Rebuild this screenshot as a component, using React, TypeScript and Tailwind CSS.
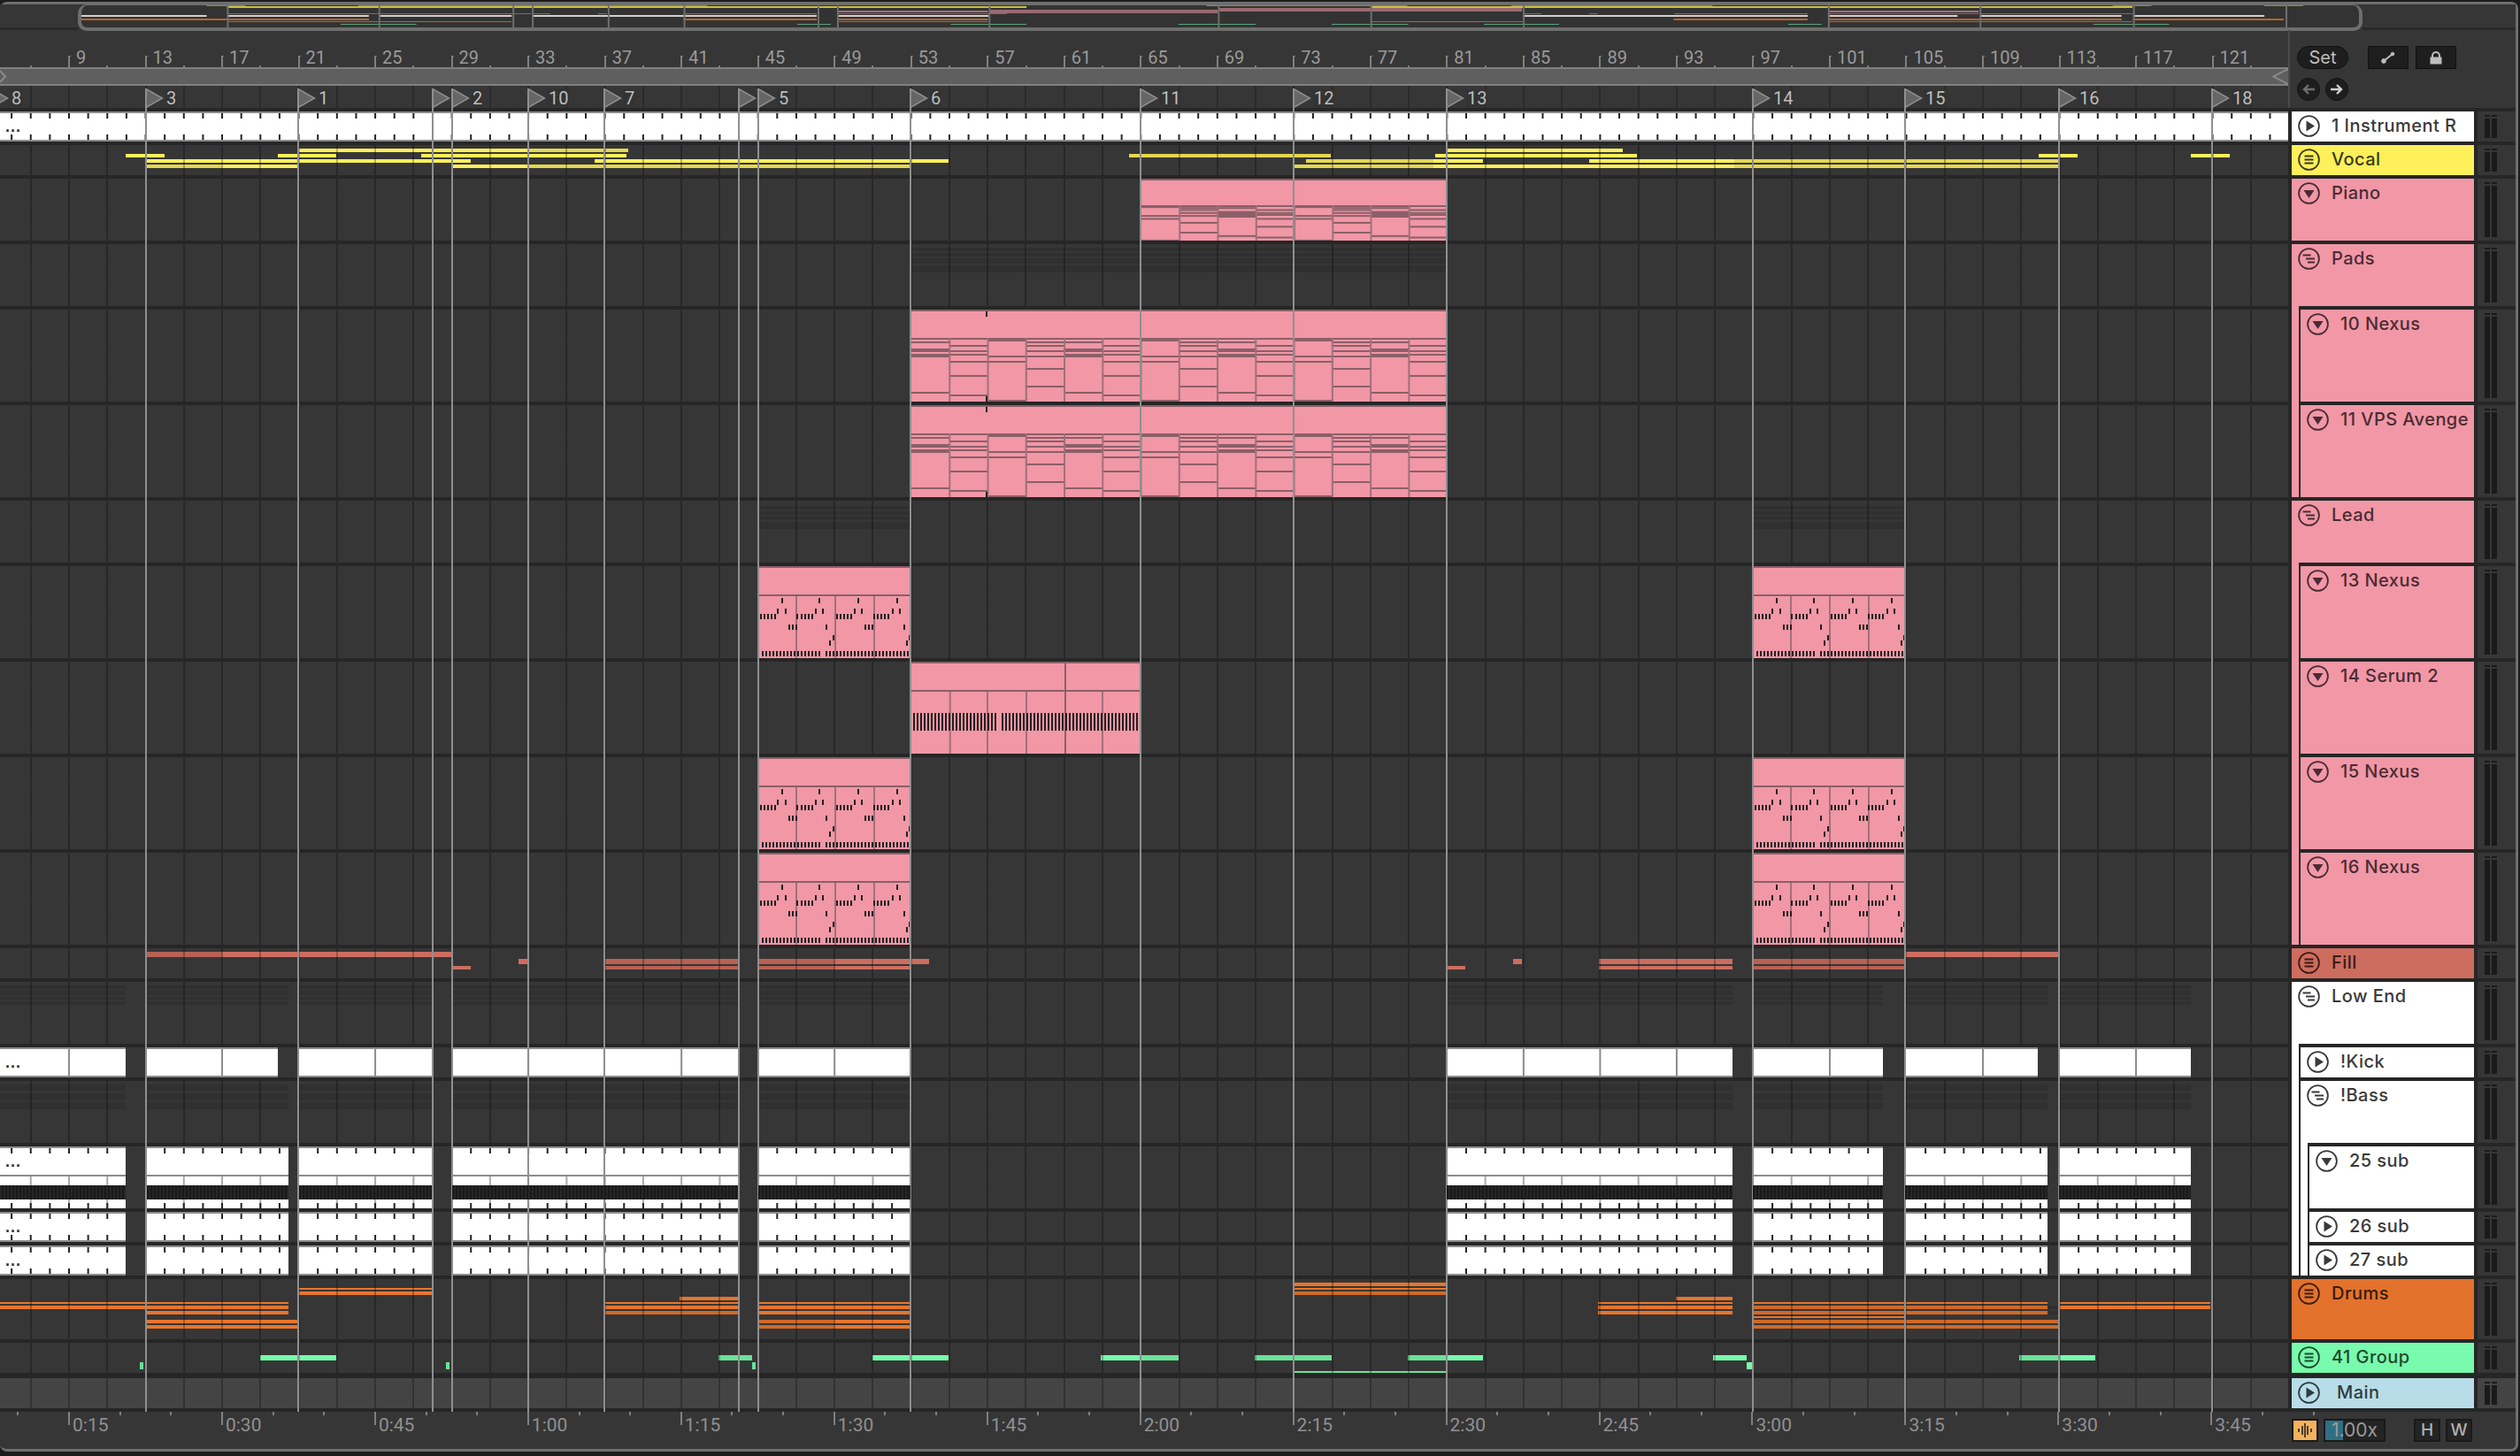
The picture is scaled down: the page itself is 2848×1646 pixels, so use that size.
import type { ReactNode } from 'react';

// bar number -> x in the arrangement
const bx = (bar: number) => 78 + (bar - 9) * 21.63;

const LOCATORS: [number, string][] = [
  [-10, '8'], [165, '3'], [337, '1'], [489, ''], [511, '2'], [597, '10'], [683, '7'], [835, ''],
  [857, '5'], [1029, '6'], [1289, '11'], [1462, '12'], [1635, '13'], [1981, '14'], [2153, '15'],
  [2327, '16'], [2500, '18'],
];

const KICK: [number, number][] = [[-10, 142], [166, 314], [338, 488], [511, 834], [857, 1029], [1635, 1958], [1981, 2128], [2153, 2303], [2327, 2476]];
const SUB: [number, number][] = [[-10, 142], [166, 326], [338, 488], [511, 834], [857, 1029], [1635, 1958], [1981, 2128], [2153, 2314], [2327, 2476]];

// x1, x2, top, height (relative to the lane)
type Note = [number, number, number, number];

const VOCAL: Note[] = [
  [338, 710, 4, 4], [1635, 1834, 4, 4],
  [142, 186, 10, 4], [314, 380, 10, 4], [476, 708, 10, 4], [1276, 1504, 10, 4], [1622, 1850, 10, 4], [2304, 2348, 10, 4], [2476, 2520, 10, 4],
  [165, 532, 16, 4], [672, 1072, 16, 4], [1476, 1676, 16, 4], [1796, 2326, 16, 4],
  [166, 336, 22, 4], [510, 1029, 22, 4], [1462, 2326, 22, 4],
];
const VOCAL_DIM: Note[] = [[1276, 1504, 10, 4], [1476, 1620, 16, 4], [1960, 2326, 16, 4], [1462, 1620, 22, 4], [1960, 2326, 22, 4], [597, 710, 4, 4], [166, 250, 22, 4], [597, 1029, 22, 4]];

const FILL: Note[] = [
  [166, 510, 4, 6], [2153, 2327, 4, 6],
  [586, 596, 12, 6], [683, 834, 12, 6], [857, 1050, 12, 6], [1710, 1720, 12, 6], [1807, 1958, 12, 6], [1981, 2152, 12, 6],
  [512, 532, 20, 4], [683, 834, 20, 4], [857, 1029, 20, 4], [1635, 1656, 20, 4], [1807, 1958, 20, 4], [1981, 2152, 20, 4],
];
const FILL_DIM: Note[] = [[166, 251, 4, 6], [683, 834, 12, 6], [683, 834, 20, 4], [857, 943, 12, 6], [857, 943, 20, 4], [1981, 2152, 12, 6], [1981, 2152, 20, 4]];

const DRUMS: Note[] = [
  [1462, 1635, 4, 4], [1462, 1635, 10, 2], [1462, 1635, 14, 4],
  [338, 488, 10, 2], [338, 488, 14, 4],
  [768, 834, 20, 4], [1894, 1958, 20, 4],
  [0, 326, 26, 2], [0, 326, 30, 4], [166, 326, 36, 4], [166, 337, 46, 4], [166, 337, 52, 4],
  [683, 834, 26, 2], [683, 834, 30, 4], [683, 834, 36, 4],
  [858, 1028, 26, 2], [858, 1028, 30, 4], [858, 1028, 36, 4], [858, 1028, 46, 4], [858, 1028, 52, 4],
  [1806, 1958, 26, 2], [1806, 1958, 30, 4], [1806, 1958, 36, 4],
  [1982, 2314, 26, 2], [1982, 2314, 30, 4], [1982, 2314, 36, 4], [1982, 2153, 42, 2], [1982, 2326, 46, 4], [1982, 2326, 52, 4],
  [2327, 2498, 26, 2], [2327, 2498, 30, 4],
];
const DRUMS_DIM: Note[] = [[1982, 2326, 30, 4], [1982, 2326, 36, 4], [1982, 2326, 46, 4], [1982, 2326, 52, 4], [1462, 1635, 14, 4], [683, 834, 36, 4], [858, 943, 46, 4], [858, 943, 52, 4]];

const GROUP: Note[] = [
  [294, 380, 14, 6], [812, 850, 14, 6], [986, 1072, 14, 6], [1244, 1332, 14, 6], [1418, 1505, 14, 6], [1591, 1676, 14, 6], [1936, 1974, 14, 6], [2282, 2368, 14, 6],
  [158, 162, 22, 8], [504, 508, 22, 8], [850, 854, 22, 8], [1974, 1980, 22, 8],
  [1462, 1635, 32, 2],
];
const GROUP_DIM: Note[] = [[812, 850, 14, 6], [1290, 1332, 14, 6], [1418, 1505, 14, 6], [1591, 1635, 14, 6], [2282, 2327, 14, 6], [1462, 1635, 32, 2], [850, 854, 22, 8], [158, 162, 22, 8], [504, 508, 22, 8]];

const ROLL: [number, number][][] = [
  [[36, 2], [44, 4], [50, 4], [93, 2]],
  [[40, 2], [46, 2], [50, 2], [58, 2], [74, 2], [96, 2]],
  [[34, 2], [52, 2], [58, 2], [102, 2]],
  [[36, 2], [40, 2], [46, 2], [52, 2], [66, 2], [86, 2]],
];

function Notes({ notes, color, dim = [] }: { notes: Note[]; color: string; dim?: Note[] }) {
  return (
    <>
      {notes.map(([a, b, top, h], i) => (
        <div key={i} className={`absolute ${color}`} style={{ left: a, width: b - a, top, height: h }} />
      ))}
      {dim.map(([a, b, top, h], i) => (
        <div key={`d${i}`} className="absolute bg-black/10" style={{ left: a, width: b - a, top, height: h }} />
      ))}
    </>
  );
}

function Faint({ segs, strips }: { segs: [number, number][]; strips: [number, number][] }) {
  return (
    <>
      {segs.map(([a, b]) =>
        strips.map(([top, h]) => (
          <div key={`${a}-${top}`} className="absolute bg-black/10" style={{ left: a, width: b - a, top, height: h }} />
        )),
      )}
    </>
  );
}

// white audio style clip with its little ticks
function WhiteClip({ a, b, h, ticks = true, bottomTicks = false, dots, dividers = false, band = false }: {
  a: number; b: number; h: number; ticks?: boolean; bottomTicks?: boolean; dots?: boolean; dividers?: boolean; band?: boolean;
}) {
  const bars: number[] = [];
  for (let i = 3; i < 125; i++) if (bx(i) > a + 2 && bx(i) < b - 1) bars.push(i);
  return (
    <div className="absolute top-0 bg-white" style={{ left: a, width: b - a, height: h }}>
      <div className="absolute inset-x-0 top-0 h-[2px] bg-[#8c8c8c]" />
      {!band && <div className="absolute inset-x-0 bottom-0 h-[2px] bg-[#8c8c8c]" />}
      {band && (
        <>
          <div className="absolute inset-x-0 top-[32px] h-[2px] bg-[#8c8c8c]" />
          <div className="absolute inset-x-0 top-[44px] h-[16px] bg-[repeating-linear-gradient(90deg,#191919_0,#191919_2px,#262626_2px,#262626_4px)] z-10" />
        </>
      )}
      <svg className="absolute inset-0" width={Math.max(b - a, 1)} height={h}>
        {bars.map((i) => {
          const x = bx(i) - a - 1;
          const step = i >= 81 ? 4 : 8;
          return (
            <g key={i}>
              {dividers && (i - 9) % step === 0 && <rect x={x} y={0} width={2} height={h} fill="#8c8c8c" />}
              {band && i % 2 === 1 && <rect x={x} y={34} width={2} height={36} fill="#aaaaaa" />}
              {ticks && <rect x={x} y={2} width={2} height={6} fill="#222222" />}
              {bottomTicks && <rect x={x} y={band ? 64 : h - 8} width={2} height={6} fill="#222222" />}
            </g>
          );
        })}
      </svg>
      {dots && (
        <span className="absolute left-[16px] top-[10px] text-[18px] leading-[14px] font-bold tracking-[1px] text-[#333] [font-family:'Liberation_Sans',sans-serif]">
          ...
        </span>
      )}
    </div>
  );
}

function PinkBox({ a, b, children }: { a: number; b: number; children: ReactNode }) {
  return (
    <div className="absolute inset-y-0 bg-[#f197a6]" style={{ left: a, width: b - a }}>
      <svg className="absolute inset-0 h-full w-full">
        <rect x={0} y={0} width={b - a} height={2} fill="#8b5f68" />
        {children}
      </svg>
    </div>
  );
}

function RollClip({ a, b, h, phase = 0 }: { a: number; b: number; h: number; phase?: number }) {
  const head = h === 104 ? 32 : 30;
  const cells = Math.ceil((b - a) / 43.26);
  const y = (v: number) => (h === 104 ? v : 30 + ((v - 32) * 40) / 72);
  return (
    <PinkBox a={a} b={b}>
      <rect x={0} y={head} width={b - a} height={2} fill="#8b5f68" />
      {Array.from({ length: cells }).map((_, i) => (
        <g key={i}>
          {ROLL[(i + phase) % 4].map(([top, t]) => (
            <rect key={top} x={i * 43.26} y={y(top)} width={43.26} height={t} fill="#8b5f68" />
          ))}
          {i > 0 && <rect x={i * 43.26 - 1} y={head} width={2} height={h - head} fill="#a0707a" />}
        </g>
      ))}
      {h === 104 && phase === 0 && (
        <>
          <rect x={84} y={2} width={2} height={6} fill="#231f20" />
          <rect x={84} y={98} width={2} height={6} fill="#231f20" />
        </>
      )}
    </PinkBox>
  );
}

const NEXUS: [number, number[]][] = [
  [36, [25, 67, 111, 155]],
  [48, [20, 29, 63, 71, 107, 115, 150, 158]],
  [54, [1, 5, 9, 13, 17, 42, 47, 51, 55, 59, 87, 91, 95, 99, 103, 129, 133, 137, 141, 145]],
  [66, [33, 37, 41, 75, 119, 123, 127, 163]],
  [78, [83, 169]],
  [84, [79, 166]],
];

function NexusClip({ a }: { a: number }) {
  const comb = Array.from({ length: 42 }, (_, i) => 3 + i * 4).filter((v) => v !== 71);
  return (
    <PinkBox a={a} b={a + 170}>
      <rect x={0} y={32} width={170} height={2} fill="#8b5f68" />
      {[41, 85, 129].map((x) => (
        <rect key={x} x={x} y={34} width={2} height={70} fill="#a0707a" />
      ))}
      {NEXUS.map(([y, xs]) => xs.map((x) => <rect key={`${y}-${x}`} x={x} y={y} width={2} height={6} fill="#231f20" />))}
      {comb.map((x) => (
        <rect key={x} x={x} y={96} width={2} height={6} fill="#231f20" />
      ))}
    </PinkBox>
  );
}

function SerumClip() {
  const comb = Array.from({ length: 64 }, (_, i) => 2 + i * 4).filter((v) => v !== 98);
  return (
    <PinkBox a={1030} b={1288}>
      <rect x={0} y={32} width={258} height={2} fill="#8b5f68" />
      {[42.7, 85, 129, 215].map((x) => (
        <rect key={x} x={x} y={34} width={2} height={70} fill="#a0707a" />
      ))}
      <rect x={173} y={2} width={2} height={102} fill="#8b5f68" />
      {comb.map((x) => (
        <rect key={x} x={x} y={58} width={2} height={20} fill="#231f20" />
      ))}
    </PinkBox>
  );
}

const NEXUS_ROW = (
  <>
    <NexusClip a={858} />
    <NexusClip a={1982} />
  </>
);

const SUB_ROW = SUB.map(([a, b], i) => <WhiteClip key={a} a={a} b={b} h={34} bottomTicks dots={i === 0} />);

const LANES: { h: number; under?: ReactNode; over?: ReactNode; main?: boolean }[] = [
  { h: 34, over: <WhiteClip a={-10} b={2586} h={34} bottomTicks dots /> },
  { h: 34, under: <Notes notes={VOCAL} dim={VOCAL_DIM} color="bg-[#fdf05a]" /> },
  { h: 70, over: <RollClip a={1290} b={1634} h={70} phase={2} /> },
  { h: 70, under: <Faint segs={[[1030, 1634]]} strips={[[4, 4], [10, 4], [16, 6], [24, 8]]} /> },
  { h: 104, over: <RollClip a={1030} b={1634} h={104} /> },
  { h: 104, over: <RollClip a={1030} b={1634} h={104} /> },
  { h: 70, under: <Faint segs={[[858, 1028], [1982, 2152]]} strips={[[6, 4], [12, 4], [18, 4], [24, 8]]} /> },
  { h: 104, over: NEXUS_ROW },
  { h: 104, over: <SerumClip /> },
  { h: 104, over: NEXUS_ROW },
  { h: 104, over: NEXUS_ROW },
  { h: 34, under: <Notes notes={FILL} dim={FILL_DIM} color="bg-[#cd6d5f]" /> },
  { h: 70, under: <Faint segs={SUB} strips={[[4, 4], [10, 5], [17, 3], [22, 4]]} /> },
  { h: 34, over: KICK.map(([a, b], i) => <WhiteClip key={a} a={a} b={b} h={34} ticks={false} dots={i === 0} dividers />) },
  { h: 70, under: <Faint segs={SUB} strips={[[4, 7], [14, 8], [24, 8]]} /> },
  { h: 70, over: SUB.map(([a, b], i) => <WhiteClip key={a} a={a} b={b} h={70} bottomTicks dots={i === 0} band />) },
  { h: 34, over: SUB_ROW },
  { h: 34, over: SUB_ROW },
  { h: 68, under: <Notes notes={DRUMS} dim={DRUMS_DIM} color="bg-[#e8752d]" /> },
  { h: 34, under: <Notes notes={GROUP} dim={GROUP_DIM} color="bg-[#78fbac]" /> },
  { h: 34, main: true },
];

function Lane({ h, under, over, main }: { h: number; under?: ReactNode; over?: ReactNode; main?: boolean }) {
  return (
    <div className={`relative w-full overflow-hidden ${main ? 'mt-[2px] bg-[#444444]' : 'bg-[#363636]'}`} style={{ height: h }}>
      {under}
      <div className="absolute inset-0 bg-[repeating-linear-gradient(90deg,transparent_0,transparent_33.74px,rgba(0,0,0,.27)_33.74px,rgba(0,0,0,.27)_35.74px,transparent_35.74px,transparent_43.26px)]" />
      {over}
    </div>
  );
}

function Meter({ h, main }: { h: number; main?: boolean }) {
  return (
    <div className={`flex gap-[2px] py-[4px] pl-2 ${main ? 'mt-[2px] bg-[#444444]' : 'bg-[#363636]'}`} style={{ height: h }}>
      {[0, 1].map((i) => (
        <div key={i} className="flex w-[6px] flex-col gap-[2px]">
          <div className="h-[2px] bg-[#1a1a1a]" />
          <div className="flex-1 bg-[#1a1a1a]" />
        </div>
      ))}
    </div>
  );
}

type IconKind = 'play' | 'down' | 'menu' | 'nest';

function TrackIcon({ kind }: { kind: IconKind }) {
  return (
    <svg width="25" height="25" viewBox="0 0 25 25" className="shrink-0" fill="none" stroke="currentColor" strokeWidth="1.8">
      <circle cx="12.5" cy="12.5" r="11.4" />
      {kind === 'play' && <path d="M9.5 6.5 L19 12.5 L9.5 18.5 Z" fill="currentColor" stroke="none" />}
      {kind === 'down' && <path d="M6.5 9 H18.5 L12.5 18 Z" fill="currentColor" stroke="none" />}
      {kind === 'menu' && <path d="M7.5 8.5 H17.5 M7.5 12.5 H17.5 M7.5 16.5 H17.5" strokeWidth="2" />}
      {kind === 'nest' && <path d="M5.5 8.5 H14.5 M9 12.5 H19 M11 16.5 H19" strokeWidth="2" />}
    </svg>
  );
}

const PINK = 'bg-[#f197a6] text-[#4a2b33]';
const WHITE = 'bg-white text-[#3a3a3a]';

function Head({ name, icon, tone, h = 34, main = false, shift = false }: {
  name: string; icon: IconKind; tone: string; h?: number; main?: boolean; shift?: boolean;
}) {
  return (
    <div className={`flex items-start pl-[7px] pt-[4px] ${tone} ${main ? 'mt-[2px]' : ''}`} style={{ height: h }}>
      <TrackIcon kind={icon} />
      <span className={`${shift ? 'ml-[19px]' : 'ml-[13px]'} whitespace-nowrap text-[20px] leading-[25px] font-medium tracking-[0.45px] [font-family:Inter,sans-serif]`}>
        {name}
      </span>
    </div>
  );
}

function Group({ name, tone, children }: { name: string; tone: string; children: ReactNode }) {
  return (
    <div className={`flex flex-col ${tone}`}>
      <Head name={name} icon="nest" tone={tone} h={70} />
      <div className="pl-2">
        <div className="flex flex-col gap-1 border-l-2 border-[#262626] bg-[#262626] pt-1">{children}</div>
      </div>
    </div>
  );
}

function Headers() {
  return (
    <div className="flex w-[206px] shrink-0 flex-col gap-1">
      <Head name="1 Instrument R" icon="play" tone={WHITE} />
      <Head name="Vocal" icon="menu" tone="bg-[#fdf05a] text-[#3c3a17]" />
      <Head name="Piano" icon="down" tone={PINK} h={70} />
      <Group name="Pads" tone={PINK}>
        <Head name="10 Nexus" icon="down" tone={PINK} h={104} />
        <Head name="11 VPS Avenge" icon="down" tone={PINK} h={104} />
      </Group>
      <Group name="Lead" tone={PINK}>
        <Head name="13 Nexus" icon="down" tone={PINK} h={104} />
        <Head name="14 Serum 2" icon="down" tone={PINK} h={104} />
        <Head name="15 Nexus" icon="down" tone={PINK} h={104} />
        <Head name="16 Nexus" icon="down" tone={PINK} h={104} />
      </Group>
      <Head name="Fill" icon="menu" tone="bg-[#cd6d5f] text-[#3d1a15]" />
      <Group name="Low End" tone={WHITE}>
        <Head name="!Kick" icon="play" tone={WHITE} />
        <Group name="!Bass" tone={WHITE}>
          <Head name="25 sub" icon="down" tone={WHITE} h={70} />
          <Head name="26 sub" icon="play" tone={WHITE} />
          <Head name="27 sub" icon="play" tone={WHITE} />
        </Group>
      </Group>
      <Head name="Drums" icon="menu" tone="bg-[#e3722d] text-[#3a1c08]" h={68} />
      <Head name="41 Group" icon="menu" tone="bg-[#78fbac] text-[#1c4a2f]" />
      <Head name="Main" icon="play" tone="bg-[#b8dde8] text-[#2f3c42]" main shift />
    </div>
  );
}

function Overview() {
  const ov = (x: number) => x * 0.9964;
  const seg = (list: [number, number][], y: number, h: number, fill: string) =>
    list.map(([a, b], i) => <rect key={`${y}-${i}`} x={Math.max(ov(a), 0)} y={y} width={ov(b) - Math.max(ov(a), 0)} height={h} fill={fill} />);
  const pick = (notes: Note[], tops: number[]) => notes.filter((n) => tops.includes(n[2])).map((n) => [n[0], n[1]] as [number, number]);
  return (
    <div className="flex h-[29px]">
      <div className="h-full w-[88px] border-b-[3px] border-[#2a2a2a] bg-[#363636]" />
      <div className="h-[30px] w-[2582px] rounded-[10px] border-x-4 border-t-[1px] border-b-4 border-[#6e6e6e] bg-[#333333]">
        <svg className="block h-full w-full">
          {seg(pick(VOCAL, [4, 10]), 0, 1, '#8f8a45')}
          {seg(pick(VOCAL, [16, 22]), 1, 2, '#c9bf40')}
          {seg([[1290, 1634]], 3, 4, '#9a6a72')}
          {seg([[1030, 1289]], 5, 4, '#9a6a72')}
          {seg([[858, 1028], [1982, 2152]], 6, 2, '#a96f7a')}
          {seg(FILL.map((n) => [n[0], n[1]] as [number, number]), 9, 1, '#a85a50')}
          {seg(SUB, 11, 2, '#d0d0d0')}
          {seg(pick(DRUMS, [26, 30]), 15, 2, '#b9622a')}
          {seg(pick(DRUMS, [14, 46]), 18, 1, '#b9622a')}
          {seg(pick(GROUP, [14]), 21, 1, '#5ba27b')}
          {LOCATORS.slice(1).map(([x]) => (
            <rect key={x} x={ov(x)} y={0} width={2} height={25} fill="#6e6e6e" />
          ))}
        </svg>
      </div>
      <div className="h-full flex-1 border-b-[3px] border-[#2a2a2a] bg-[#363636]" />
    </div>
  );
}

function BeatRuler() {
  const labels = Array.from({ length: 29 }, (_, i) => 9 + i * 4);
  const shorts = Array.from({ length: 30 }, (_, i) => 7 + i * 4);
  return (
    <div className="relative h-[42px] [font-family:Roboto,sans-serif]">
      {labels.map((bar) => (
        <div key={bar} className="absolute top-[29px] h-[13px] w-[3px] border-t border-l-2 border-[#808080]" style={{ left: bx(bar) - 1 }}>
          <span className="absolute top-[-9px] left-[7px] whitespace-nowrap text-[20px] leading-[20px] text-[#9a9a9a]">{bar}</span>
        </div>
      ))}
      {shorts.map((bar) => (
        <div key={bar} className="absolute top-[40px] h-[2px] w-[2px] bg-[#808080]" style={{ left: bx(bar) - 1 }} />
      ))}
    </div>
  );
}

function ScrollBar() {
  return (
    <div className="relative h-[21px] border-y-2 border-[#808080] bg-[#5f5f5f]">
      <svg className="absolute top-0 left-0" width="8" height="17">
        <path d="M0 2 L6 8.5 L0 15" fill="none" stroke="#8a8a8a" strokeWidth="2" />
      </svg>
      <svg className="absolute top-0 right-0" width="18" height="17">
        <path d="M18 0 L1 8.5 L18 17" fill="none" stroke="#8a8a8a" strokeWidth="2" />
      </svg>
    </div>
  );
}

function Markers() {
  return (
    <div className="relative h-[25px] overflow-hidden bg-[repeating-linear-gradient(90deg,#363636_0,#363636_33.74px,#2a2a2a_33.74px,#2a2a2a_35.74px,#363636_35.74px,#363636_43.26px)] [font-family:Roboto,sans-serif]">
      {LOCATORS.map(([x, label]) => (
        <div key={x} className="absolute top-[3px] flex items-center" style={{ left: x - 1 }}>
          <svg width="21" height="22">
            <path d="M1 0.5 L19.5 11 L1 21.5 Z" fill="#666666" stroke="#8f8f8f" strokeWidth="1.5" />
          </svg>
          {label && <span className="ml-[2px] bg-[#333333] px-[1px] text-[20px] leading-[20px] text-[#bdbdbd]">{label}</span>}
        </div>
      ))}
    </div>
  );
}

function TopRight() {
  return (
    <div className="flex flex-1 flex-col border-l-2 border-[#4a4a4a] pt-[18px] pl-2 [font-family:Inter,sans-serif]">
      <div className="flex items-center">
        <div className="flex h-[26px] w-[58px] items-center justify-center rounded-full border border-[#111111] bg-[#1e1e1e] text-[20px] text-[#bdbdbd]">Set</div>
        <div className="ml-[22px] flex h-[26px] w-[46px] items-center justify-center border border-[#111111] bg-[#1e1e1e]">
          <svg width="16" height="14" viewBox="0 0 16 14" fill="#bdbdbd" stroke="#bdbdbd">
            <path d="M3 11 L13 3" strokeWidth="2" />
            <circle cx="3" cy="11" r="2.4" />
            <circle cx="13" cy="3" r="1.8" />
          </svg>
        </div>
        <div className="ml-2 flex h-[26px] w-[46px] items-center justify-center border border-[#111111] bg-[#1e1e1e]">
          <svg width="16" height="15" viewBox="0 0 16 15">
            <path d="M4 7 V5 A4 4 0 0 1 12 5 V7" fill="none" stroke="#bdbdbd" strokeWidth="2" />
            <rect x="1.5" y="6.5" width="13" height="8" fill="#bdbdbd" />
          </svg>
        </div>
      </div>
      <div className="mt-[10px] flex gap-[6px]">
        <div className="flex h-[26px] w-[26px] items-center justify-center rounded-full border border-[#111111] bg-[#1e1e1e]">
          <svg width="14" height="12" viewBox="0 0 14 12" fill="none" stroke="#6f6f6f" strokeWidth="2.4">
            <path d="M14 6 H2 M7 1 L2 6 L7 11" />
          </svg>
        </div>
        <div className="flex h-[26px] w-[26px] items-center justify-center rounded-full border border-[#111111] bg-[#1e1e1e]">
          <svg width="14" height="12" viewBox="0 0 14 12" fill="none" stroke="#d0d0d0" strokeWidth="2.4">
            <path d="M0 6 H12 M7 1 L12 6 L7 11" />
          </svg>
        </div>
      </div>
    </div>
  );
}

function TimeRuler() {
  const times = ['0:15', '0:30', '0:45', '1:00', '1:15', '1:30', '1:45', '2:00', '2:15', '2:30', '2:45', '3:00', '3:15', '3:30', '3:45'];
  const small: number[] = [];
  for (let i = -1; i < 45; i++) if ((i + 300) % 3 !== 0) small.push(77 + i * 57.65);
  return (
    <div className="relative h-full w-[2586px] shrink-0 [font-family:Roboto,sans-serif]">
      {small.map((x) => (
        <div key={x} className="absolute top-0 h-[4px] w-[2px] bg-[#808080]" style={{ left: x }} />
      ))}
      {times.map((t, i) => (
        <div key={t} className="absolute top-0 h-[15px] w-[2px] bg-[#808080]" style={{ left: 77 + i * 172.95 }}>
          <span className="absolute top-[5px] left-[5px] whitespace-nowrap text-[21px] leading-[20px] text-[#909090]">{t}</span>
        </div>
      ))}
    </div>
  );
}

function BottomRight() {
  return (
    <div className="flex flex-1 items-start pt-2 pl-1 [font-family:Inter,sans-serif]">
      <div className="flex h-[26px] w-[30px] items-center justify-center border-2 border-[#1a1a1a] bg-[#f5b25b]">
        <svg width="18" height="16" viewBox="0 0 18 16" stroke="#222222" strokeWidth="1.6">
          <path d="M2 6 V10 M6 3 V13 M9 0 V16 M12 3 V13 M16 6 V10" />
        </svg>
      </div>
      <div className="relative ml-[6px] flex h-[26px] w-[70px] items-center border-2 border-[#1a1a1a] bg-[#242424] pl-[7px] text-[21px] text-[#9a9a9a]">
        <div className="absolute inset-y-0 left-0 w-[20px] bg-[#2f6f85]" />
        <span className="relative">1.00x</span>
      </div>
      <div className="ml-[32px] flex h-[26px] w-[30px] items-center justify-center border-2 border-[#1a1a1a] bg-[#242424] text-[19px] font-medium text-[#b0b0b0]">H</div>
      <div className="ml-[6px] flex h-[26px] w-[30px] items-center justify-center border-2 border-[#1a1a1a] bg-[#242424] text-[19px] font-medium text-[#b0b0b0]">W</div>
    </div>
  );
}

export default function App() {
  return (
    <div className="h-[1646px] w-[2848px] overflow-hidden bg-[#1c1c1c] pt-[2px] pr-[2px]">
      <div className="flex h-[1639px] flex-col rounded-[8px] border-t-[3px] border-r-[3px] border-b-[3px] border-[#6e6e6e] bg-[#363636]">
        <Overview />
        <div className="flex h-[88px] shrink-0">
          <div className="w-[2586px] shrink-0">
            <BeatRuler />
            <ScrollBar />
            <Markers />
          </div>
          <TopRight />
        </div>
        <div className="relative flex h-[1474px] shrink-0 gap-1 bg-[#262626] py-1">
          <div className="flex w-[2586px] shrink-0 flex-col gap-1">
            {LANES.map((l, i) => (
              <Lane key={i} h={l.h} under={l.under} over={l.over} main={l.main} />
            ))}
          </div>
          <Headers />
          <div className="flex flex-1 flex-col gap-1">
            {LANES.map((l, i) => (
              <Meter key={i} h={l.h} main={l.main} />
            ))}
          </div>
          {LOCATORS.slice(1).map(([x]) => (
            <div key={x} className="absolute top-[-22px] bottom-0 w-[2px] bg-[#8f8f8f]" style={{ left: x - 1 }} />
          ))}
        </div>
        <div className="flex h-[42px] shrink-0">
          <TimeRuler />
          <BottomRight />
        </div>
      </div>
    </div>
  );
}
